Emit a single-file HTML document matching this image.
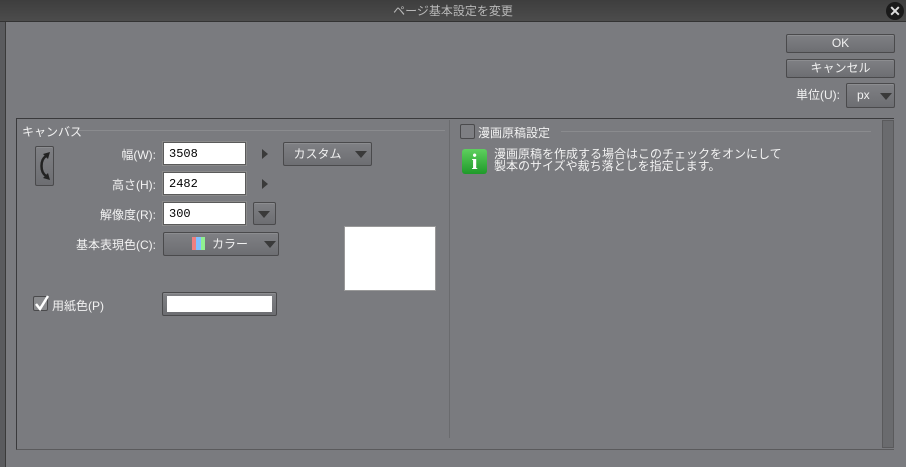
<!DOCTYPE html>
<html><head><meta charset="utf-8"><style>
*{box-sizing:border-box;margin:0;padding:0}
body{width:906px;height:467px;overflow:hidden;background:#7a7b7f;font-family:"Liberation Sans","Noto Sans CJK JP",sans-serif;font-size:12px;color:#f2f2f2;position:relative}
.a{position:absolute}
.title{left:0;top:0;width:906px;height:22px;background:linear-gradient(#3e3e3e,#4c4c4c);border-bottom:1px solid #333;text-align:center;line-height:22px;color:#b8b8b8;font-size:12px}
.btn{background:linear-gradient(#7f8084,#6d6e72);border:1px solid #4a4a4c;border-radius:2px;box-shadow:inset 0 1px 0 #8c8d90;color:#f0f0f0;text-align:center}
.inp{background:#fff;border:1px solid #5a5a5a;box-shadow:0 0 0 1px #8a8a8a;color:#000;padding-left:5px;line-height:22px;font-family:"Liberation Mono",monospace;font-size:12px}
.tri{width:0;height:0;border-left:6px solid transparent;border-right:6px solid transparent;border-top:7px solid #3a3a3a}
.rtri{width:0;height:0;border-top:5px solid transparent;border-bottom:5px solid transparent;border-left:6px solid #3a3a3a}
.lbl{text-align:right;font-size:12px}
</style></head><body>
<div class="a title">ページ基本設定を変更</div>
<div class="a" style="left:886px;top:2px;width:18px;height:18px;border-radius:9px;background:#1a1a1a;color:#ddd;font-weight:bold;text-align:center;line-height:18px;font-size:14px">✕</div>
<div class="a" style="left:0;top:22px;width:6px;height:445px;background:#5a5b5e;border-right:1px solid #3a3a3a"></div>

<div class="a btn" style="left:786px;top:34px;width:109px;height:19px;line-height:17px">OK</div>
<div class="a btn" style="left:786px;top:59px;width:109px;height:19px;line-height:17px">キャンセル</div>
<div class="a" style="left:796px;top:88px;line-height:14px">単位(U):</div>
<div class="a btn" style="left:846px;top:83px;width:49px;height:25px;line-height:23px;text-align:left;padding-left:10px">px</div>
<div class="a tri" style="left:880px;top:93px"></div>

<div class="a" style="left:16px;top:118px;width:878px;height:332px;border-top:1px solid #3a3a3c;border-left:1px solid #3a3a3c;border-bottom:1px solid #5a5a5c"></div>
<div class="a" style="left:22px;top:123px;font-size:12px">キャンバス</div>
<div class="a" style="left:78px;top:130px;width:367px;height:1px;background:#5c5d60;border-bottom:1px solid #8a8b8e"></div>
<div class="a" style="left:449px;top:120px;width:1px;height:318px;background:#6a6b6e"></div>

<div class="a btn" style="left:35px;top:146px;width:19px;height:40px"></div>
<svg class="a" style="left:35px;top:146px" width="19" height="40"><path d="M11 10 C5 14 5 26 11 30" stroke="#222" stroke-width="2.5" fill="none"/><path d="M8 8 L15 6 L13 13 Z M8 32 L15 34 L13 27 Z" fill="#222"/></svg>

<div class="a lbl" style="left:80px;top:146px;width:76px">幅(W):</div>
<div class="a inp" style="left:163px;top:142px;width:83px;height:23px">3508</div>
<div class="a rtri" style="left:262px;top:149px"></div>
<div class="a btn" style="left:283px;top:142px;width:89px;height:24px;line-height:22px;padding-right:20px">カスタム</div>
<div class="a tri" style="left:355px;top:151px"></div>

<div class="a lbl" style="left:80px;top:176px;width:76px">高さ(H):</div>
<div class="a inp" style="left:163px;top:172px;width:83px;height:23px">2482</div>
<div class="a rtri" style="left:262px;top:179px"></div>

<div class="a lbl" style="left:60px;top:206px;width:96px">解像度(R):</div>
<div class="a inp" style="left:163px;top:202px;width:83px;height:23px">300</div>
<div class="a btn" style="left:253px;top:202px;width:23px;height:23px"></div>
<div class="a tri" style="left:258px;top:211px"></div>

<div class="a lbl" style="left:40px;top:236px;width:116px">基本表現色(C):</div>
<div class="a btn" style="left:163px;top:232px;width:116px;height:24px;line-height:22px;text-align:left;padding-left:48px">カラー</div>
<div class="a" style="left:192px;top:237px;width:4px;height:13px;background:#f08080"></div>
<div class="a" style="left:196px;top:237px;width:5px;height:13px;background:#80c0ff"></div>
<div class="a" style="left:201px;top:237px;width:4px;height:13px;background:#90f090"></div>
<div class="a tri" style="left:264px;top:241px"></div>
<div class="a" style="left:344px;top:226px;width:92px;height:65px;background:#fff;border:1px solid #999"></div>

<div class="a" style="left:33px;top:296px;width:15px;height:15px;border:1px solid #4a4a4c;border-radius:2px;background:#8a8b8e"></div>
<svg class="a" style="left:33px;top:293px" width="18" height="20"><path d="M3 11 L7 16 L15 3" stroke="#fff" stroke-width="2.5" fill="none"/></svg>
<div class="a" style="left:52px;top:297px">用紙色(P)</div>
<div class="a btn" style="left:162px;top:292px;width:115px;height:24px"></div>
<div class="a" style="left:167px;top:296px;width:105px;height:16px;background:#fff"></div>

<div class="a" style="left:460px;top:124px;width:15px;height:15px;border:1px solid #4a4a4c;border-radius:2px;background:#7e7f83"></div>
<div class="a" style="left:478px;top:124px">漫画原稿設定</div>
<div class="a" style="left:561px;top:131px;width:310px;height:1px;background:#666;border-bottom:1px solid #8a8b8e"></div>
<div class="a" style="left:462px;top:149px;width:25px;height:25px;border-radius:3px;background:linear-gradient(#5ed05e,#1f9a2a);color:#fff;font-family:'Liberation Serif',serif;font-weight:bold;font-size:22px;text-align:center;line-height:25px">i</div>
<div class="a" style="left:494px;top:148px;line-height:12px;font-size:12px">漫画原稿を作成する場合はこのチェックをオンにして<br>製本のサイズや裁ち落としを指定します。</div>

<div class="a" style="left:882px;top:120px;width:12px;height:328px;background:#6a6b6e;border:1px solid #5a5a5c"></div>
</body></html>
